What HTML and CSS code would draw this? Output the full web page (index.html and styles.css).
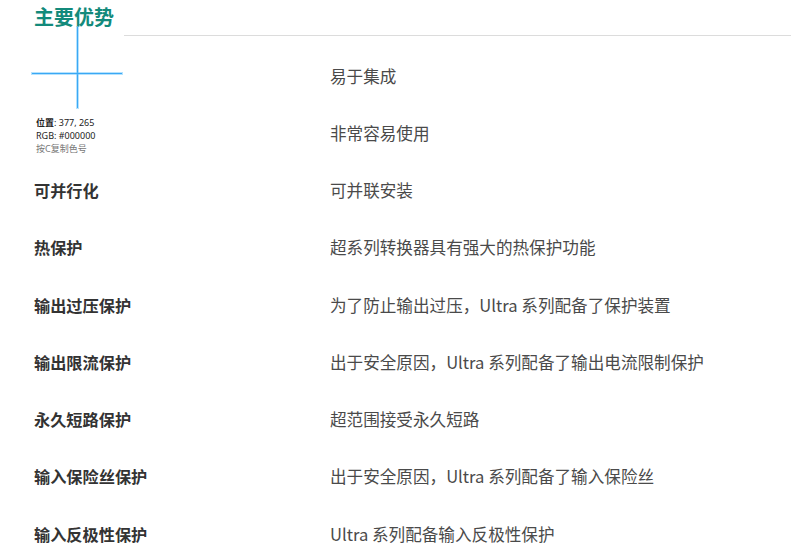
FILE: index.html
```html
<!DOCTYPE html>
<html lang="zh-CN">
  <head>
    <meta charset="UTF-8" />
    <title>主要优势</title>
    <link rel="stylesheet" href="styles.css">
  </head>
  <body>
    <div class="section">
      <div class="section-head">
        <h2>主要优势</h2>
      </div>

      <div class="features">
        <div class="row"><div class="label"></div><div class="value">易于集成</div></div>
        <div class="row"><div class="label"></div><div class="value">非常容易使用</div></div>
        <div class="row"><div class="label">可并行化</div><div class="value">可并联安装</div></div>
        <div class="row"><div class="label">热保护</div><div class="value">超系列转换器具有强大的热保护功能</div></div>
        <div class="row"><div class="label">输出过压保护</div><div class="value">为了防止输出过压，Ultra 系列配备了保护装置</div></div>
        <div class="row"><div class="label">输出限流保护</div><div class="value">出于安全原因，Ultra 系列配备了输出电流限制保护</div></div>
        <div class="row"><div class="label">永久短路保护</div><div class="value">超范围接受永久短路</div></div>
        <div class="row"><div class="label">输入保险丝保护</div><div class="value">出于安全原因，Ultra 系列配备了输入保险丝</div></div>
        <div class="row"><div class="label">输入反极性保护</div><div class="value">Ultra 系列配备输入反极性保护</div></div>
      </div>
    </div>

    <!-- colour picker overlay -->
    <div class="picker">
      <div class="cross">
        <span class="cross-v"></span>
        <span class="cross-h"></span>
      </div>
      <div class="picker-info">
        <div><b>位置</b>: 377, 265</div>
        <div>RGB: #000000</div>
        <div class="hint">按C复制色号</div>
      </div>
    </div>
  </body>
</html>
```

FILE: styles.css
```css
body {
  font-family: "Noto Sans CJK SC", "Noto Sans", sans-serif;
  background: #fff;
  color: #333;
  margin: 0;
  padding: 0 9px 0 34px;
}

.section-head {
  border-bottom: 1px solid #dcdcdc;
  height: 35px;
}

.section-head h2 {
  margin: 0;
  padding-top: 3px;
  font-size: 20px;
  line-height: 28px;
  font-weight: 700;
  color: #138a7b;
}

.features {
  padding-top: 11px;
}

.row {
  display: grid;
  grid-template-columns: 296px 1fr;
  align-items: center;
  height: 57.25px;
  line-height: 22px;
}

.label {
  font-size: 16.2px;
  font-weight: 700;
  color: #333;
}

.value {
  font-size: 16.6px;
  color: #4a4a4a;
}

.picker {
  position: absolute;
  left: 32px;
  top: 27px;
  width: 92px;
  height: 130px;
  background: #fff;
}

.cross {
  position: relative;
  height: 81px;
}

.cross-v {
  position: absolute;
  left: 45px;
  top: 0;
  width: 1px;
  height: 81px;
  background: #3aa8f5;
  box-shadow: 0 0 0 1px rgba(90, 190, 250, 0.45);
}

.cross-h {
  position: absolute;
  left: 0;
  top: 46px;
  width: 90px;
  height: 1px;
  background: #3aa8f5;
  box-shadow: 0 0 0 1px rgba(90, 190, 250, 0.45);
}

.picker-info {
  padding: 8px 0 0 4px;
  font-family: "Noto Sans", "Noto Sans CJK SC", sans-serif;
  font-size: 9px;
  line-height: 13px;
  color: #222;
}

.picker-info b {
  font-weight: 700;
}

.picker-info .hint {
  color: #777;
}
```
